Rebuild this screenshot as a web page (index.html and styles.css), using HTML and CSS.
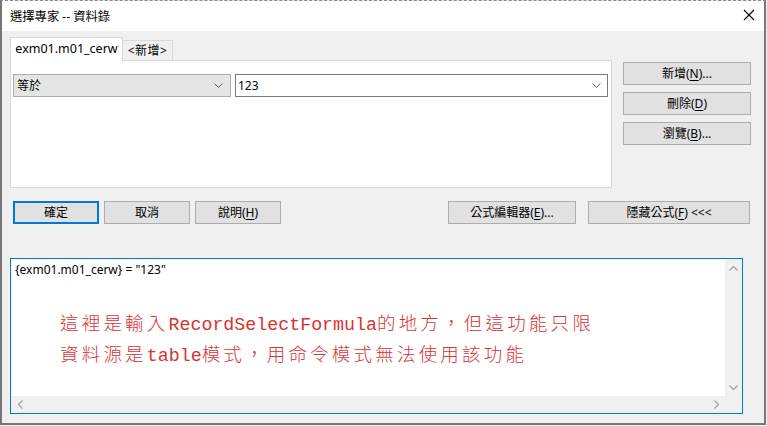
FILE: index.html
```html
<!DOCTYPE html>
<html lang="zh-Hant">
<head>
<meta charset="utf-8">
<link rel="stylesheet" href="styles.css">
</head>
<body>
<div class="window">
  <div class="titlebar">
    <span class="title">選擇專家 -- 資料錄</span>
    <svg class="close" width="12" height="12" viewBox="0 0 12 12"><path d="M1 1 L11 11 M11 1 L1 11" stroke="#000" stroke-width="1.1" fill="none"/></svg>
  </div>
  <div class="content">
    <div class="top">
      <div class="left">
        <div class="tabs">
          <div class="tab active">exm01.m01_cerw</div>
          <div class="tab">&lt;新增&gt;</div>
        </div>
        <div class="panel">
          <div class="combo gray">
            <span>等於</span>
            <svg class="chev" width="9" height="5" viewBox="0 0 9 5"><path d="M0.5 0.5 L4.5 4.5 L8.5 0.5" stroke="#606060" fill="none"/></svg>
          </div>
          <div class="combo white">
            <span>123</span>
            <svg class="chev" width="9" height="5" viewBox="0 0 9 5"><path d="M0.5 0.5 L4.5 4.5 L8.5 0.5" stroke="#606060" fill="none"/></svg>
          </div>
        </div>
      </div>
      <div class="side">
        <div class="btn side-btn">新增(<u>N</u>)...</div>
        <div class="btn side-btn">刪除(<u>D</u>)</div>
        <div class="btn side-btn">瀏覽(<u>B</u>)...</div>
      </div>
    </div>
    <div class="actions">
      <div class="btn act default">確定</div>
      <div class="btn act">取消</div>
      <div class="btn act">說明(<u>H</u>)</div>
      <div class="btn formula">公式編輯器(<u>E</u>)...</div>
      <div class="btn hide">隱藏公式(<u>F</u>) &lt;&lt;&lt;</div>
    </div>
    <div class="editor">
      <div class="text">
        <div class="code">{exm01.m01_cerw} = "123"</div>
        <div class="note">
          <div>這裡是輸入<span class="lat">RecordSelectFormula</span>的地方，但這功能只限</div>
          <div>資料源是<span class="lat">table</span>模式，用命令模式無法使用該功能</div>
        </div>
      </div>
      <div class="vscroll">
        <svg width="9" height="5" viewBox="0 0 9 5"><path d="M0.5 4.5 L4.5 0.5 L8.5 4.5" stroke="#a6a6a6" stroke-width="1.3" fill="none"/></svg>
        <svg width="9" height="5" viewBox="0 0 9 5"><path d="M0.5 0.5 L4.5 4.5 L8.5 0.5" stroke="#a6a6a6" stroke-width="1.3" fill="none"/></svg>
      </div>
      <div class="hscroll">
        <svg width="5" height="9" viewBox="0 0 5 9"><path d="M4.5 0.5 L0.5 4.5 L4.5 8.5" stroke="#a6a6a6" stroke-width="1.3" fill="none"/></svg>
        <svg width="5" height="9" viewBox="0 0 5 9"><path d="M0.5 0.5 L4.5 4.5 L0.5 8.5" stroke="#a6a6a6" stroke-width="1.3" fill="none"/></svg>
      </div>
      <div class="corner"></div>
    </div>
  </div>
</div>
</body>
</html>
```

FILE: styles.css
```css
* { box-sizing: border-box; }
html, body { margin: 0; padding: 0; background: #f0f0f0; }
body {
  font-family: "Noto Sans", "Noto Sans CJK TC", sans-serif;
  font-size: 12px;
  color: #000;
  width: 767px;
  height: 426px;
  overflow: hidden;
}
.window {
  width: 766px;
  height: 425px;
  background: #f0f0f0;
  border-left: 2px solid #777;
  border-right: 2px solid #777;
  border-bottom: 2px solid #777;
  border-top: 1px dashed #8a8a8a;
  display: flex;
  flex-direction: column;
}
.titlebar {
  height: 30px;
  background: #fff;
  display: flex;
  align-items: center;
  padding-left: 8px;
  padding-right: 8px;
  flex: none;
}
.title {
  font-family: "Noto Sans CJK TC", sans-serif;
  font-size: 12.3px;
  line-height: 16px;
  flex: 1;
  margin-top: -1px;
}
.close { margin-right: 1px; margin-top: -2px; }
.content {
  flex: 1;
  padding-left: 8px;
  display: flex;
  flex-direction: column;
}
.top { display: flex; }
.left { width: 602px; padding-top: 6px; }
.tabs {
  display: flex;
  align-items: flex-end;
  margin-bottom: -1px;
  position: relative;
  z-index: 1;
}
.tab {
  border: 1px solid #d9d9d9;
  display: flex;
  align-items: center;
  justify-content: center;
  line-height: 14px;
}
.tab.active {
  width: 113px;
  height: 24px;
  background: #fff;
  border-bottom: none;
  font-size: 12.5px;
  padding-bottom: 1px;
}
.tab:not(.active) {
  width: 50px;
  height: 21px;
  background: #f0f0f0;
  border-left: none;
  padding-top: 1px;
  letter-spacing: 0.5px;
}
.panel {
  height: 128px;
  background: #fff;
  border: 1px solid #d9d9d9;
  padding: 13px 3px 0 2px;
  display: flex;
  gap: 4px;
  align-items: flex-start;
}
.combo {
  height: 23px;
  display: flex;
  align-items: center;
  justify-content: space-between;
  padding: 0 7px 0 3px;
  line-height: 14px;
}
.combo.gray { width: 218px; background: #e5e5e5; border: 1px solid #adadad; }
.combo.white { width: 373px; background: #fff; border: 1px solid #7a7a7a; padding-left: 2px; padding-right: 6px; }
.chev { flex: none; }
.side {
  margin-left: 11px;
  padding-top: 31px;
  display: flex;
  flex-direction: column;
  gap: 7px;
}
.btn {
  height: 23px;
  background: #e1e1e1;
  border: 1px solid #adadad;
  display: flex;
  align-items: center;
  justify-content: center;
  line-height: 14px;
  white-space: nowrap;
}
.btn u { text-decoration-thickness: 1px; text-underline-offset: 2px; }
.side-btn { width: 128px; }
.actions {
  display: flex;
  margin-top: 13px;
  padding-left: 3px;
  gap: 5px;
}
.act { width: 86px; }
.act.default { border: 2px solid #0078d7; }
.formula { width: 128px; margin-left: 162px; }
.hide { width: 162px; margin-left: 7px; }
.editor {
  margin-top: 34px;
  width: 733px;
  height: 156px;
  border: 1px solid #0078d7;
  background: #fff;
  display: grid;
  grid-template-columns: 1fr 17px;
  grid-template-rows: 1fr 17px;
}
.text { padding: 3px 0 0 4px; overflow: hidden; }
.code { line-height: 16px; }
.note {
  margin-top: 30px;
  margin-left: 45px;
  color: #d63333;
  font-family: "Noto Sans CJK TC", sans-serif;
  font-weight: 300;
  font-size: 18.5px;
  letter-spacing: 3.2px;
  line-height: 28px;
  white-space: nowrap;
}
.lat {
  font-family: "Liberation Mono", monospace;
  font-weight: 400;
  font-size: 18.3px;
  letter-spacing: 0;
}
.vscroll {
  background: #f0f0f0;
  display: flex;
  flex-direction: column;
  justify-content: space-between;
  align-items: center;
  padding: 7px 0 6px;
}
.hscroll {
  background: #f0f0f0;
  display: flex;
  justify-content: space-between;
  align-items: center;
  padding: 0 6px 0 7px;
}
.corner { background: #f0f0f0; }
```
